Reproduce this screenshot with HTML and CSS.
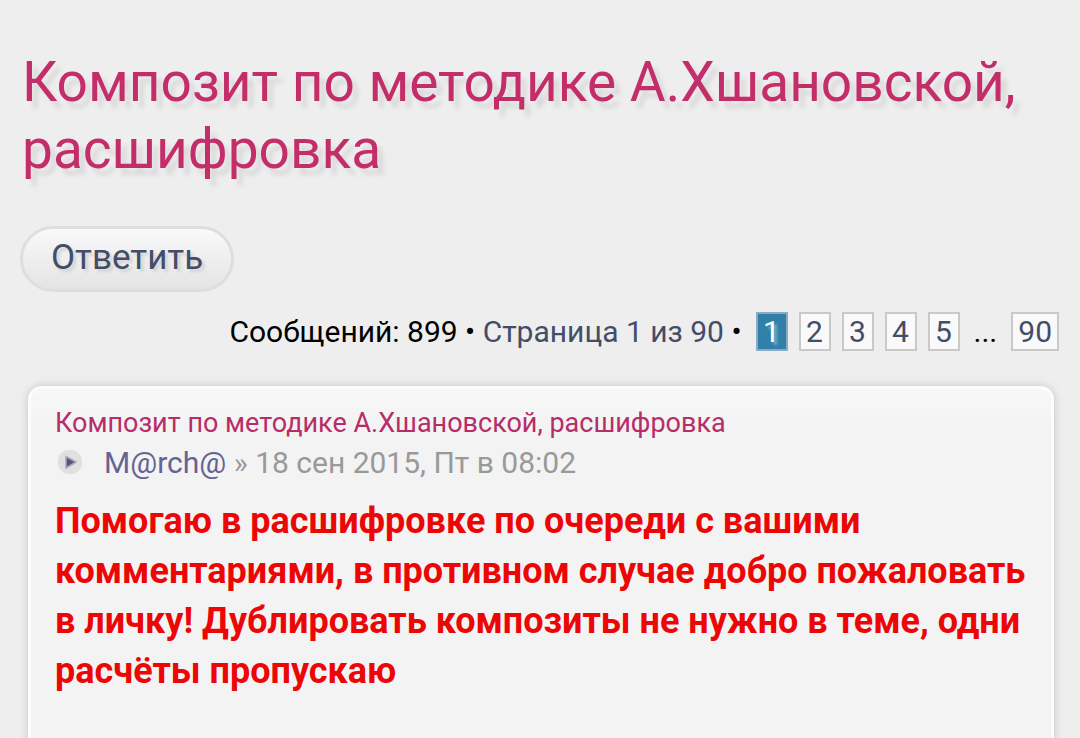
FILE: index.html
```html
<!DOCTYPE html>
<html lang="ru">
<head>
<meta charset="utf-8">
<meta name="viewport" content="width=device-width">
<title>Композит по методике А.Хшановской, расшифровка</title>
<link rel="stylesheet" href="styles.css">
</head>
<body>
<main class="page">
  <h1 class="topic-title">Композит по методике А.Хшановской, расшифровка</h1>
  <button class="reply" type="button">Ответить</button>
  <nav class="pagination" aria-label="Страницы">
    <span>Сообщений: 899 • <a href="#">Страница 1 из 90</a> •</span>
    <strong class="page-box current">1</strong>
    <a class="page-box" href="#">2</a>
    <a class="page-box" href="#">3</a>
    <a class="page-box" href="#">4</a>
    <a class="page-box" href="#">5</a>
    <span class="dots">...</span>
    <a class="page-box" href="#">90</a>
  </nav>
  <article class="post">
    <h2 class="post-title"><a href="#">Композит по методике А.Хшановской, расшифровка</a></h2>
    <p class="author">
      <svg class="post-icon" viewBox="0 0 26 26" aria-hidden="true"><rect x="2" y="0" width="24" height="24" rx="11" fill="#e0e0e0"/><path d="M10 6.500l10 5.500-10 6z" fill="#5c5080" stroke="#a9a3bb" stroke-width="1.500" stroke-linejoin="round"/></svg>
      <span><a href="#">M@rch@</a> » 18 сен 2015, Пт в 08:02</span>
    </p>
    <p class="content">Помогаю в расшифровке по очереди с вашими комментариями, в противном случае добро пожаловать в личку! Дублировать композиты не нужно в теме, одни расчёты пропускаю</p>
  </article>
</main>
</body>
</html>
```
FILE: styles.css
```css
* { box-sizing: border-box; }
body { margin: 0; background: #eee; color: #000; font-family: Roboto, sans-serif; }
a { color: #434d68; text-decoration: none; }
.page { display: flex; flex-direction: column; padding: 49px 21px 0; }
.topic-title { margin: 0; padding-left: 1px; color: #c32d69; font-size: 55px; font-weight: 400; line-height: 67px; text-shadow: 6px 7px 4px #dadada; }
.reply { align-self: flex-start; margin-top: 43px; margin-left: -1px; height: 66px; padding: 0 28px 4px; border: 3px solid #dedede; border-radius: 33px; background: linear-gradient(#f9f9f9, #e4e4e4); color: #434d68; font: 35px Roboto, sans-serif; text-shadow: 3px 3px 3px #d2d2d2; }
.pagination { display: flex; justify-content: flex-end; align-items: center; gap: 11px; margin-top: 20px; font-size: 30px; line-height: 35px; }
.page-box { min-width: 32px; padding: 0 5px; height: 39px; border: 2px solid #c9c9c9; background: #f9f9f9; font-weight: 400; text-align: center; }
.current { margin-left: 3px; background: #3080aa; border-color: #8fa8c6; color: #fff; text-shadow: 3px 3px 3px #7fb4cf; }
.dots { margin: 0 3px; }
.post { margin: 35px 5px 0 7px; padding: 18px 24px 48px; border: 3px solid #fcfcfc; border-bottom: 0; border-radius: 14px 14px 0 0; background: linear-gradient(#f8f8f8, #f3f3f3 36px); box-shadow: 0 0 9px #c4c4c4; }
.post-title { margin: 0; font-size: 27px; font-weight: 400; line-height: 32px; }
.post-title a { color: #b82c68; }
.author { display: flex; align-items: center; gap: 22px; margin: 4px 0 0; padding-left: 1px; color: #999; font-size: 30px; line-height: 40px; }
.author a { color: #646494; }
.post-icon { width: 26px; height: 26px; }
.content { margin: 12px 0 0; padding-top: 1px; color: #ec0606; font-size: 36px; font-weight: 700; line-height: 50px; }
```
